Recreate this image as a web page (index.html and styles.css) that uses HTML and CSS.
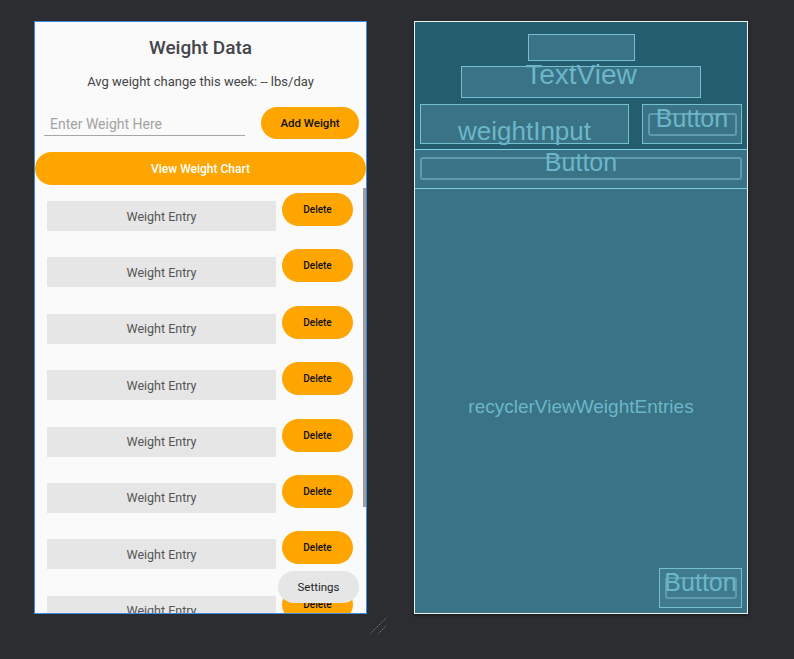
FILE: index.html
```html
<!DOCTYPE html>
<html>
<head>
<meta charset="utf-8">
<link rel="stylesheet" href="styles.css">
</head>
<body>
<div class="stage">
  <div class="phone">
    <h1 class="title">Weight Data</h1>
    <p class="subtitle">Avg weight change this week: -- lbs/day</p>
    <div class="input-row">
      <div class="field"><span class="placeholder">Enter Weight Here</span></div>
      <div class="btn btn-add">Add Weight</div>
    </div>
    <div class="btn btn-chart">View Weight Chart</div>
    <div class="list">
      <div class="row"><div class="entry">Weight Entry</div><div class="btn btn-del">Delete</div></div>
      <div class="row"><div class="entry">Weight Entry</div><div class="btn btn-del">Delete</div></div>
      <div class="row"><div class="entry">Weight Entry</div><div class="btn btn-del">Delete</div></div>
      <div class="row"><div class="entry">Weight Entry</div><div class="btn btn-del">Delete</div></div>
      <div class="row"><div class="entry">Weight Entry</div><div class="btn btn-del">Delete</div></div>
      <div class="row"><div class="entry">Weight Entry</div><div class="btn btn-del">Delete</div></div>
      <div class="row"><div class="entry">Weight Entry</div><div class="btn btn-del">Delete</div></div>
      <div class="row"><div class="entry">Weight Entry</div><div class="btn btn-del">Delete</div></div>
    </div>
    <div class="scrollbar"></div>
    <div class="btn btn-settings">Settings</div>
  </div>

  <div class="blueprint">
    <div class="bp-top">
      <div class="bp-box bp-empty"></div>
      <div class="bp-box bp-textview"><span class="bp-label bp-label-tv">TextView</span></div>
      <div class="bp-row">
        <div class="bp-box bp-input"><span class="bp-label bp-label-input">weightInput</span></div>
        <div class="bp-box bp-btnbox"><span class="bp-inner bp-inner-add"></span><span class="bp-label bp-label-btn">Button</span></div>
      </div>
    </div>
    <div class="bp-chart">
      <span class="bp-inner bp-inner-chart"></span>
      <span class="bp-label bp-label-chart">Button</span>
    </div>
    <div class="bp-recycler">
      <span class="bp-rec-text">recyclerViewWeightEntries</span>
      <div class="bp-box bp-settings"><span class="bp-inner bp-inner-set"></span><span class="bp-label bp-label-btn">Button</span></div>
    </div>
  </div>

  <svg class="resize" width="20" height="20" viewBox="0 0 20 20">
    <line x1="1.5" y1="17.5" x2="17.5" y2="1.5" stroke="#7a7a7a" stroke-width="1" stroke-dasharray="1.4 1"/>
    <line x1="9.5" y1="17.5" x2="17.5" y2="9.5" stroke="#7a7a7a" stroke-width="1" stroke-dasharray="1.4 1"/>
  </svg>
</div>
</body>
</html>
```

FILE: styles.css
```css
* { box-sizing: border-box; }

html, body {
  margin: 0;
  padding: 0;
  background: #2c2d30;
  width: 794px;
  height: 659px;
  overflow: hidden;
}

.stage {
  position: relative;
  display: flex;
  align-items: flex-start;
  gap: 47px;
  padding: 21px 0 0 34px;
  height: 659px;
}

/* ---------- design preview ---------- */
.phone {
  position: relative;
  width: 333px;
  height: 593px;
  border: 1px solid #3d8ae4;
  background: #fafafa;
  overflow: hidden;
  font-family: Roboto, "Liberation Sans", sans-serif;
  display: flex;
  flex-direction: column;
}

.phone > * { flex: none; }

.title {
  margin: 14px 0 0;
  font-size: 19px;
  line-height: 24px;
  font-weight: 500;
  color: #44454a;
  text-align: center;
}

.subtitle {
  margin: 14px 0 0;
  font-size: 13px;
  line-height: 16px;
  color: #454545;
  text-align: center;
}

.input-row {
  display: flex;
  align-items: flex-start;
  margin-top: 17px;
  padding-left: 9px;
  gap: 16px;
}

.field {
  width: 201px;
  height: 29px;
  padding: 8px 0 0 6px;
  border-bottom: 1px solid #a6a6a6;
}

.placeholder {
  display: block;
  font-size: 14px;
  line-height: 18px;
  color: #a3a3a3;
}

.btn {
  display: flex;
  align-items: center;
  justify-content: center;
  background: #ffa500;
  border-radius: 17px;
  font-weight: 500;
  color: #111;
  flex: none;
}

.btn-add {
  width: 98px;
  height: 32px;
  font-size: 11.5px;
}

.btn-chart {
  margin-top: 13px;
  width: 331px;
  height: 33px;
  font-size: 12px;
  color: #fff;
}

.list {
  display: flex;
  flex-direction: column;
}

.row {
  display: flex;
  align-items: flex-start;
  height: 56.4px;
  flex: none;
}

.entry {
  margin: 16px 0 0 12px;
  width: 229px;
  height: 30px;
  background: #e6e6e6;
  color: #555;
  font-size: 12.5px;
  display: flex;
  align-items: center;
  justify-content: center;
  flex: none;
}

.btn-del {
  margin: 8px 0 0 6px;
  width: 71px;
  height: 33px;
  font-size: 10px;
}

.scrollbar {
  position: absolute;
  left: 328px;
  top: 166px;
  width: 3px;
  height: 319px;
  background: #9c9c9c;
}

.btn-settings {
  position: absolute;
  left: 243px;
  top: 549px;
  width: 81px;
  height: 32px;
  background: #e6e6e6;
  border-radius: 16px;
  font-size: 11.5px;
  font-weight: 400;
  color: #1e1e1e;
}

/* ---------- blueprint ---------- */
.blueprint {
  width: 334px;
  height: 593px;
  border: 1px solid #eef2f3;
  background: #397385;
  display: flex;
  flex-direction: column;
  font-family: "Liberation Sans", Arial, sans-serif;
  color: #6cb6ca;
  box-shadow: 0 1px 3px rgba(0,0,0,0.5);
}

.bp-top {
  height: 127px;
  background: #235d6e;
  display: flex;
  flex-direction: column;
  align-items: center;
  padding-top: 12px;
  flex: none;
}

.bp-box {
  position: relative;
  background: #397385;
  border: 1px solid #74bfd2;
  flex: none;
}

.bp-empty { width: 107px; height: 27px; }
.bp-textview { width: 240px; height: 32px; margin-top: 5px; }

.bp-row {
  display: flex;
  gap: 13px;
  margin-top: 6px;
  align-self: stretch;
  padding: 0 5px;
}

.bp-input { width: 209px; height: 40px; }
.bp-btnbox { width: 100px; height: 40px; }

.bp-label {
  position: absolute;
  left: -20px;
  right: -20px;
  text-align: center;
  white-space: nowrap;
}

.bp-label-tv { top: -6px; font-size: 28px; line-height: 28px; }
.bp-label-input { top: 13px; font-size: 26px; line-height: 26px; }
.bp-label-btn { top: 1px; font-size: 25px; line-height: 25px; }

.bp-inner {
  position: absolute;
  border: 2px solid #5e9cad;
  border-radius: 3px;
}

.bp-inner-add { left: 5px; top: 8px; width: 89px; height: 23px; }

.bp-chart {
  position: relative;
  height: 40px;
  border-top: 1px solid #7fcfe2;
  border-bottom: 1px solid #7fcfe2;
  flex: none;
}

.bp-inner-chart { left: 5px; right: 5px; top: 7px; height: 23px; }
.bp-label-chart { top: 0; left: 0; right: 0; font-size: 25px; line-height: 25px; }

.bp-recycler {
  position: relative;
  flex: 1;
  display: flex;
  align-items: center;
  justify-content: center;
  padding-top: 11px;
}

.bp-rec-text {
  font-size: 19px;
  line-height: 22px;
}

.bp-settings {
  position: absolute;
  right: 5px;
  bottom: 5px;
  width: 83px;
  height: 40px;
  background: #3f7b8d;
}

.bp-inner-set { left: 5px; top: 8px; width: 72px; height: 22px; }

.resize {
  position: absolute;
  left: 369px;
  top: 616px;
}
```
